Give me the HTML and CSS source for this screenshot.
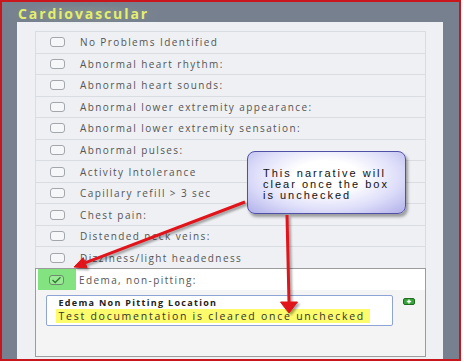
FILE: index.html
```html
<!DOCTYPE html>
<html>
<head>
    <title>Cardiovascular</title>
    <link rel="stylesheet" href="styles.css">
</head>
<body>
    <div class="frame">
        <div class="title"><span class="title-text">Cardiovascular</span></div>
        <div class="panel">
            <ul class="checklist">
                <li class="item"><span class="box"></span><span class="label">No Problems Identified</span></li>
                <li class="item"><span class="box"></span><span class="label">Abnormal heart rhythm:</span></li>
                <li class="item"><span class="box"></span><span class="label">Abnormal heart sounds:</span></li>
                <li class="item"><span class="box"></span><span class="label">Abnormal lower extremity appearance:</span></li>
                <li class="item"><span class="box"></span><span class="label">Abnormal lower extremity sensation:</span></li>
                <li class="item"><span class="box"></span><span class="label">Abnormal pulses:</span></li>
                <li class="item"><span class="box"></span><span class="label">Activity Intolerance</span></li>
                <li class="item"><span class="box"></span><span class="label">Capillary refill &gt; 3 sec</span></li>
                <li class="item"><span class="box"></span><span class="label">Chest pain:</span></li>
                <li class="item"><span class="box"></span><span class="label">Distended neck veins:</span></li>
                <li class="item"><span class="box"></span><span class="label">Dizziness/light headedness</span></li>
                <li class="item-open">
                    <div class="item-head">
                        <span class="box-wrap">
                            <span class="box checked">
                                <svg width="11" height="8" viewBox="0 0 11 8"><path d="M1.5 4 L4.2 6.5 L9.5 1.2" fill="none" stroke="#2d7d2d" stroke-width="1.4"/></svg>
                            </span>
                        </span>
                        <span class="label">Edema, non-pitting:</span>
                    </div>
                    <div class="item-body">
                        <div class="field">
                            <div class="field-label">Edema Non Pitting Location</div>
                            <div class="field-value"><mark>Test documentation is cleared once unchecked</mark></div>
                        </div>
                        <span class="add-btn">
                            <svg width="6" height="5" viewBox="0 0 6 5"><path d="M3 0.5 V4.5 M0.8 2.5 H5.2" stroke="#fff" stroke-width="1.4"/></svg>
                        </span>
                    </div>
                </li>
            </ul>
        </div>

        <div class="callout">This narrative will<br>clear once the box<br>is unchecked</div>

        <svg class="arrows" width="461" height="361" viewBox="0 0 461 361">
            <g fill="#e0141a" stroke="#e0141a">
                <line x1="245" y1="202" x2="85" y2="262.8" stroke-width="3"/>
                <polygon points="74,267 87,267.8 83.2,257.6" stroke-width="1"/>
                <line x1="287" y1="215" x2="289" y2="302" stroke-width="3"/>
                <polygon points="289,313 280.5,302 297.5,302" stroke-width="1"/>
            </g>
        </svg>
    </div>
</body>
</html>
```

FILE: styles.css
```css
body {
    margin: 0;
    background: #fff;
}

.frame {
    position: relative;
    width: 461px;
    height: 361px;
    box-sizing: border-box;
    border: 2px solid #c9161d;
    background: #76808f;
    overflow: hidden;
    font-family: "Open Sans", sans-serif;
}

.title {
    height: 20px;
    padding-left: 6px;
}

.title-text {
    display: inline-block;
    height: 20px;
    padding: 0 10px;
    line-height: 20px;
    font-size: 14px;
    font-weight: bold;
    letter-spacing: 1.9px;
    color: #e4ef6c;
    background: radial-gradient(ellipse at center, rgba(170, 190, 140, 0.28), rgba(118, 128, 143, 0) 75%);
}

.panel {
    margin-left: 15px;
    width: 426px;
    height: 339px;
    box-sizing: border-box;
    padding: 9px 17px 0 18px;
    background: #eef0f3;
}

.checklist {
    list-style: none;
    margin: 0;
    padding: 0;
    border-top: 1px solid #d9dce0;
}

.item {
    display: flex;
    align-items: center;
    height: 21.55px;
    box-sizing: border-box;
    border: 1px solid #d9dce0;
    border-top: none;
    padding-left: 14px;
}

.box {
    display: flex;
    align-items: center;
    justify-content: center;
    width: 15px;
    height: 10px;
    box-sizing: border-box;
    border: 1px solid #a3a7ac;
    border-radius: 3px;
    background: #f6f7f9;
    flex-shrink: 0;
}

.label {
    margin-left: 15px;
    font-size: 10px;
    letter-spacing: 1.4px;
    color: #555;
    white-space: nowrap;
}

.item-open {
    border: 1.5px solid #9c9c9c;
    margin-top: -1px;
}

.item-head {
    display: flex;
    align-items: stretch;
    height: 21px;
    padding-left: 2px;
    background: #fff;
}

.box-wrap {
    display: flex;
    align-items: center;
    width: 38px;
    box-sizing: border-box;
    padding-left: 11px;
    background: #84e381;
}

.box.checked {
    background: #9bea98;
    border-color: #6d8a6d;
}

.item-head .label {
    margin-left: 3px;
    align-self: center;
}

.item-body {
    display: flex;
    align-items: flex-start;
    height: 66px;
    box-sizing: border-box;
    padding: 5px 0 0 9.5px;
    background: #f4f4f4;
}

.field {
    width: 347px;
    height: 31px;
    box-sizing: border-box;
    border: 1px solid #8ea3d6;
    border-radius: 2px;
    background: #fff;
    padding: 0.5px 0 0 9px;
}

.field-label {
    margin-left: 3px;
    font-size: 9px;
    line-height: 12px;
    font-weight: bold;
    letter-spacing: 1.3px;
    color: #222;
}

.field-value {
    height: 14px;
    margin-top: 0.5px;
    font-size: 10.5px;
    line-height: 14px;
    letter-spacing: 1.75px;
    color: #333;
}

.field-value mark {
    display: inline-block;
    height: 14px;
    padding: 0 5px 0 3px;
    background: #fbfb6c;
    color: #333;
}

.add-btn {
    display: flex;
    align-items: center;
    justify-content: center;
    width: 12px;
    height: 7px;
    margin: 3px 0 0 10px;
    box-sizing: border-box;
    border: 1px solid #1f6e1f;
    border-radius: 2px;
    background: #35a335;
}

.callout {
    position: absolute;
    left: 245px;
    top: 149px;
    width: 159px;
    height: 63px;
    box-sizing: border-box;
    padding: 16px 0 0 15px;
    border: 1.5px solid #5050a8;
    border-radius: 8px;
    background: radial-gradient(ellipse at 50% 40%, #ffffff 30%, #dedefa 65%, #b0b0ea 100%);
    box-shadow: 2px 3px 3px rgba(0, 0, 0, 0.35);
    font-family: "Liberation Sans", Arial, sans-serif;
    font-size: 11px;
    line-height: 10.8px;
    letter-spacing: 2px;
    color: #111;
}

.arrows {
    position: absolute;
    left: -2px;
    top: -2px;
    pointer-events: none;
    filter: drop-shadow(2px 2px 1px rgba(0, 0, 0, 0.35));
}
```
